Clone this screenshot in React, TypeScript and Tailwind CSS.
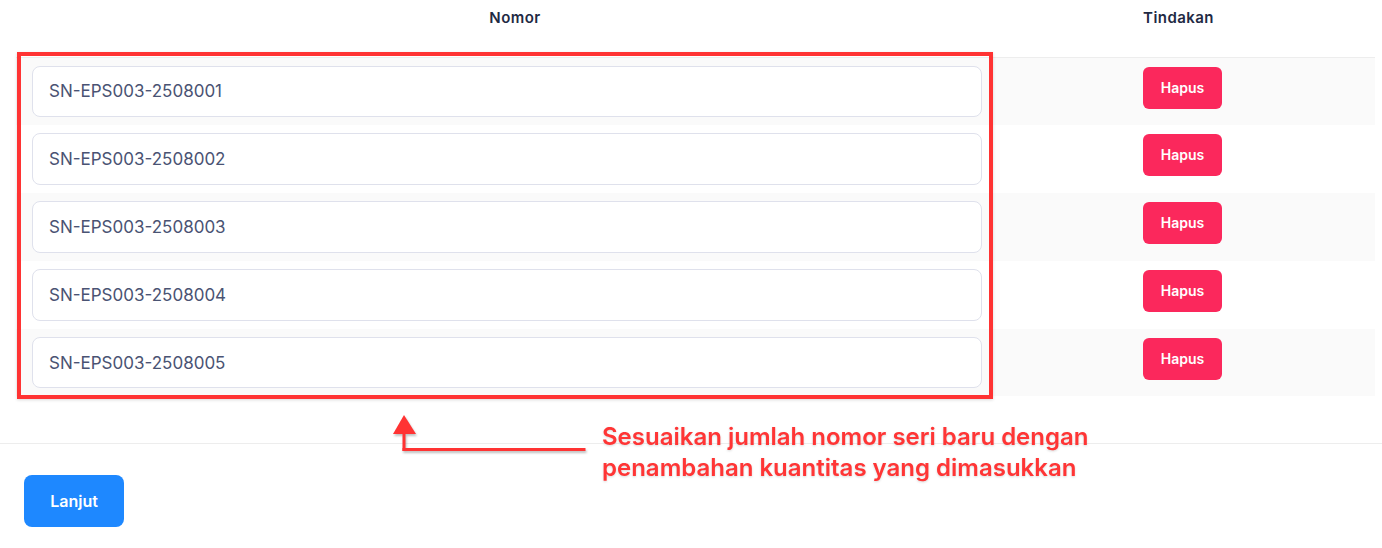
import React from 'react';

const serials = [
    'SN-EPS003-2508001',
    'SN-EPS003-2508002',
    'SN-EPS003-2508003',
    'SN-EPS003-2508004',
    'SN-EPS003-2508005',
];

const App = () => {
    return (
        <div className="relative w-[1382px] h-[548px] bg-white font-['Inter',sans-serif] overflow-hidden">
            <div className="pl-4 pr-[7px]">
                <table className="w-full border-collapse">
                    <thead>
                        <tr className="h-[57px] border-b border-[#ededed]">
                            <th className="w-[982px] align-top pt-[8px] pl-4 text-[15px] leading-5 tracking-[0.03em] font-semibold text-[#1f2a44] text-center">Nomor</th>
                            <th className="align-top pt-[8px] pr-4 text-[15px] leading-5 tracking-[0.03em] font-semibold text-[#1f2a44] text-center">Tindakan</th>
                        </tr>
                    </thead>
                    <tbody>
                        {serials.map((sn, i) => (
                            <tr key={sn} className={i % 2 === 0 ? 'bg-[#fafafa]' : 'bg-white'}>
                                <td className="px-4 py-2">
                                    <input
                                        readOnly
                                        value={sn}
                                        className="block w-full h-[51.8px] px-4 rounded-lg border border-[#dfe1ec] bg-white text-[17px] text-[#4a5373] outline-none"
                                    />
                                </td>
                                <td className="align-top text-center pt-[9px] pr-[8px]">
                                    <button className="w-[79px] h-[42px] rounded-md bg-[#fb285c] text-white text-sm font-semibold">
                                        Hapus
                                    </button>
                                </td>
                            </tr>
                        ))}
                    </tbody>
                </table>
            </div>

            <div className="mt-[47px] border-t border-[#ededed] px-6 pt-[31px]">
                <button className="w-[100px] h-[52px] rounded-lg bg-[#1e88ff] text-white text-base font-semibold">
                    Lanjut
                </button>
            </div>

            {/* annotation overlay */}
            <div className="absolute left-[17px] top-[52px] w-[976px] h-[347px] border-4 border-[#ff3333] shadow-[0_1px_3px_rgba(0,0,0,0.15)]" />
            <svg className="absolute left-[390px] top-[412px] drop-shadow-[1px_2px_1px_rgba(0,0,0,0.25)]" width="200" height="46" viewBox="0 0 200 46">
                <polygon points="14,3 3,22 26,22" fill="#ff3333" />
                <rect x="12.5" y="20" width="3" height="19" fill="#ff3333" />
                <rect x="12.5" y="36" width="183" height="3" fill="#ff3333" />
            </svg>
            <div className="absolute left-[602px] top-[421px] text-[24px] leading-[31px] font-semibold text-[#ff3535] drop-shadow-[0_1px_1px_rgba(0,0,0,0.15)]">
                <div>Sesuaikan jumlah nomor seri baru dengan</div>
                <div>penambahan kuantitas yang dimasukkan</div>
            </div>
        </div>
    );
};

export default App;
